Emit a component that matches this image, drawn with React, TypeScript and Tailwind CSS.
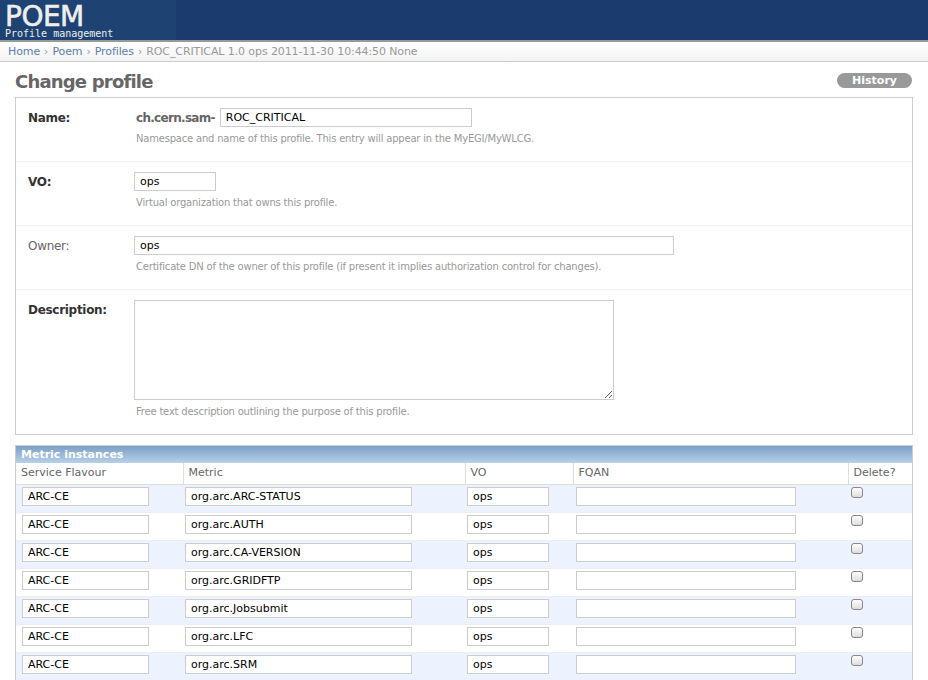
import React from 'react';

const font = "font-['Lucida_Grande','DejaVu_Sans',Verdana,sans-serif]";

const metrics = [
  'org.arc.ARC-STATUS',
  'org.arc.AUTH',
  'org.arc.CA-VERSION',
  'org.arc.GRIDFTP',
  'org.arc.Jobsubmit',
  'org.arc.LFC',
  'org.arc.SRM',
];

function TextInput({ value, className }: { value: string; className: string }) {
  return (
    <input
      readOnly
      value={value}
      className={`h-[19px] border border-[#ccc] bg-white px-[5px] text-[11px] text-black outline-none ${className}`}
    />
  );
}

function FormRow({
  label,
  bold = true,
  children,
  help,
  last = false,
}: {
  label: string;
  bold?: boolean;
  children: React.ReactNode;
  help: string;
  last?: boolean;
}) {
  return (
    <div className={`flex px-[12px] pt-[10px] pb-[15px] ${last ? '' : 'border-b border-[#eee]'}`}>
      <label
        className={`w-[106px] shrink-0 pt-[1px] text-[12px] tracking-[-0.3px] ${
          bold ? 'font-bold text-[#333]' : 'text-[#666]'
        }`}
      >
        {label}
      </label>
      <div className="flex flex-col">
        {children}
        <p className="mt-[4px] pl-[2px] text-[10px] tracking-[-0.2px] text-[#999]">{help}</p>
      </div>
    </div>
  );
}

export default function App() {
  return (
    <div className={`${font} min-h-[680px] bg-white text-[#333]`}>
      {/* Header */}
      <header className="flex h-[40px] bg-[#1b3a6e]">
        <div className="w-[176px] bg-[#1e4373] pl-[5px] text-[#eee]">
          <div className="mt-[5px] text-[28px] leading-[23px] tracking-[-0.5px] [-webkit-text-stroke:0.6px_#eee]">
            POEM
          </div>
          <div className="font-['DejaVu_Sans_Mono',monospace] text-[10px] leading-[11px]">
            Profile management
          </div>
        </div>
      </header>
      <div className="h-[2px] bg-[#999]" />

      {/* Breadcrumbs */}
      <div className="flex h-[20px] items-center border-b border-[#ccc] bg-gradient-to-b from-white to-[#f3f3f3] pl-[8px] pt-[1px] text-[11px] tracking-[-0.1px] text-[#999]">
        <a className="text-[#5b80b2]">Home</a>
        <span className="px-[4px]">›</span>
        <a className="text-[#5b80b2]">Poem</a>
        <span className="px-[4px]">›</span>
        <a className="text-[#5b80b2]">Profiles</a>
        <span className="px-[4px]">›</span>
        <span>ROC_CRITICAL 1.0 ops 2011-11-30 10:44:50 None</span>
      </div>

      <div className="px-[15px]">
        {/* Title row */}
        <div className="flex items-start justify-between pt-[8px] pb-[3px]">
          <h1 className="text-[18px] font-bold leading-[24px] tracking-[-0.8px] text-[#666]">Change profile</h1>
          <button className="mr-[1px] mt-[3px] rounded-full bg-[#999] px-[15px] text-[11px] font-bold leading-[15px] text-white">
            History
          </button>
        </div>

        {/* Fieldset */}
        <div className="border border-[#ccc]">
          <FormRow label="Name:" help="Namespace and name of this profile. This entry will appear in the MyEGI/MyWLCG.">
            <div className="flex items-center">
              <span className="pl-[2px] pr-[5px] text-[12px] font-bold tracking-[-0.7px] text-[#666]">ch.cern.sam-</span>
              <TextInput value="ROC_CRITICAL" className="w-[252px]" />
            </div>
          </FormRow>
          <FormRow label="VO:" help="Virtual organization that owns this profile.">
            <TextInput value="ops" className="w-[82px]" />
          </FormRow>
          <FormRow
            label="Owner:"
            bold={false}
            help="Certificate DN of the owner of this profile (if present it implies authorization control for changes)."
          >
            <TextInput value="ops" className="w-[540px]" />
          </FormRow>
          <FormRow label="Description:" help="Free text description outlining the purpose of this profile." last>
            <textarea readOnly className="h-[100px] w-[480px] resize border border-[#ccc] bg-white outline-none" />
          </FormRow>
        </div>

        {/* Metric instances */}
        <div className="mt-[10px] border border-[#ccc]">
          <div className="h-[17px] bg-gradient-to-b from-[#7ca0c7] to-[#b8d0e8] pl-[5px] text-[11px] font-bold leading-[17px] text-white">
            Metric instances
          </div>
          <table className="w-full table-fixed border-collapse text-[11px]">
            <colgroup>
              <col className="w-[167px]" />
              <col className="w-[282px]" />
              <col className="w-[108px]" />
              <col className="w-[275px]" />
              <col />
            </colgroup>
            <thead>
              <tr className="h-[21px] border-b border-[#ddd] bg-white text-left text-[#666]">
                <th className="pl-[5px] font-normal">Service Flavour</th>
                <th className="border-l border-[#ddd] pl-[5px] font-normal">Metric</th>
                <th className="border-l border-[#ddd] pl-[5px] font-normal">VO</th>
                <th className="border-l border-[#ddd] pl-[5px] font-normal">FQAN</th>
                <th className="border-l border-[#ddd] pl-[5px] font-normal">Delete?</th>
              </tr>
            </thead>
            <tbody>
              {metrics.map((m, i) => (
                <tr key={m} className={`h-[28px] border-b border-[#eee] ${i % 2 === 0 ? 'bg-[#edf3fe]' : 'bg-white'}`}>
                  <td className="pl-[6px] pt-[2px] align-top">
                    <TextInput value="ARC-CE" className="w-[127px]" />
                  </td>
                  <td className="pl-[2px] pt-[2px] align-top">
                    <TextInput value={m} className="w-[227px]" />
                  </td>
                  <td className="pl-[2px] pt-[2px] align-top">
                    <TextInput value="ops" className="w-[82px]" />
                  </td>
                  <td className="pl-[3px] pt-[2px] align-top">
                    <TextInput value="" className="w-[220px]" />
                  </td>
                  <td className="pl-[3px] pt-[2px] align-top">
                    <span className="block h-[11px] w-[12px] rounded-[3px] border border-[#888] bg-gradient-to-b from-white to-[#ddd]" />
                  </td>
                </tr>
              ))}
            </tbody>
          </table>
        </div>
      </div>
    </div>
  );
}
